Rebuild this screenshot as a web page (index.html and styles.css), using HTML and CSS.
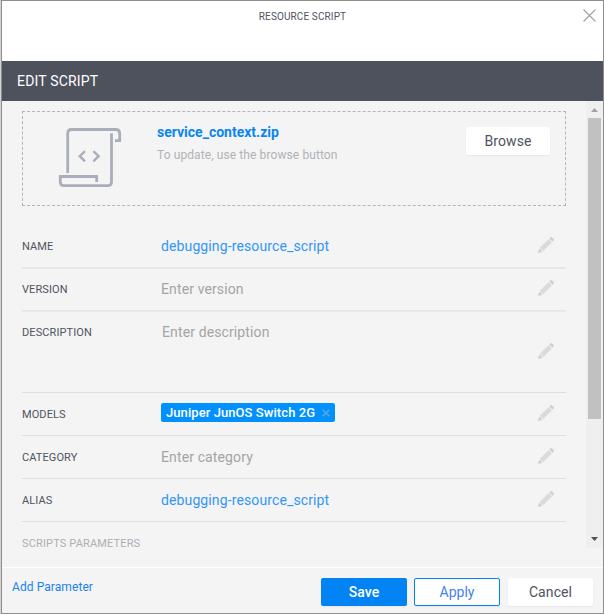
FILE: index.html
```html
<!DOCTYPE html>
<html lang="en">
<head>
<meta charset="utf-8">
<title>Resource Script</title>
<link rel="stylesheet" href="styles.css">
</head>
<body>
<svg class="defs" width="0" height="0" aria-hidden="true">
  <symbol id="pencil" viewBox="0 0 16 16">
    <path d="M0 16l1.2-4.6 3.4 3.4z" fill="#cfcfcf"/>
    <path d="M1.7 10.7L10.6 2l3.4 3.4-8.9 8.900z" fill="#dcdcdc"/>
    <path d="M11.3 1.4L12.5.3q.7-.6 1.4 0l1.8 1.8q.6.7 0 1.4l-1.1 1.2z" fill="#d0d0d0"/>
    <path d="M3.4 12.6l8.900-8.900" stroke="#d6d6d6" stroke-width=".8"/>
  </symbol>
</svg>
<div class="dialog">
  <header class="top">
    <h1 class="title">RESOURCE SCRIPT</h1>
    <svg class="close" width="13" height="13" viewBox="0 0 13 13"><path d="M.5.5l12 12M12.5.5l-12 12"/></svg>
  </header>
  <h2 class="bar"><span>EDIT SCRIPT</span></h2>
  <div class="body">
    <main class="form">
      <section class="drop">
        <svg class="script-icon" width="80" height="75" viewBox="0 0 80 75">
          <path d="M17.700 53V13.500q0-4 4-4H65.500q4.200 0 4.200 4v7.200H65"/>
          <path d="M61.500 13.200V62q0 3.700-3.700 3.700H14q-3.700 0-3.700-3.700V56.500H46.700V62"/>
          <path class="code" d="M35 31.200L29.800 36.200 35 41.400M43.400 31.200L48.600 36.200 43.400 41.400"/>
        </svg>
        <div class="file">
          <div class="file-name">service_context.zip</div>
          <div class="file-hint">To update, use the browse button</div>
        </div>
        <button class="btn browse">Browse</button>
      </section>
      <div class="row soft"><span class="label">NAME</span><span class="value link">debugging-resource_script</span><svg class="pen"><use href="#pencil"/></svg></div>
      <div class="row soft"><span class="label">VERSION</span><span class="value">Enter version</span><svg class="pen"><use href="#pencil"/></svg></div>
      <div class="row tall"><span class="label">DESCRIPTION</span><span class="value">Enter description</span><svg class="pen"><use href="#pencil"/></svg></div>
      <div class="row"><span class="label">MODELS</span><span class="value tags"><span class="tag">Juniper JunOS Switch 2G<svg class="tag-x" width="8" height="8" viewBox="0 0 8 8"><path d="M.7.7l6.600 6.600M7.300.7L.7 7.300"/></svg></span></span><svg class="pen"><use href="#pencil"/></svg></div>
      <div class="row"><span class="label">CATEGORY</span><span class="value">Enter category</span><svg class="pen"><use href="#pencil"/></svg></div>
      <div class="row"><span class="label">ALIAS</span><span class="value link">debugging-resource_script</span><svg class="pen"><use href="#pencil"/></svg></div>
      <div class="section-label">SCRIPTS PARAMETERS</div>
    </main>
    <div class="scroll">
      <svg class="arrow" width="7" height="4" viewBox="0 0 7 4"><path d="M0 4L3.500 0 7 4z" fill="#a3a3a3"/></svg>
      <div class="thumb"></div>
      <svg class="arrow" width="7" height="4" viewBox="0 0 7 4"><path d="M0 0L3.500 4 7 0z" fill="#505050"/></svg>
    </div>
  </div>
  <footer class="footer">
    <a class="add">Add Parameter</a>
    <button class="btn save">Save</button>
    <button class="btn apply">Apply</button>
    <button class="btn cancel">Cancel</button>
  </footer>
</div>
</body>
</html>
```
FILE: styles.css
```css
* { box-sizing: border-box; }
body {
  margin: 0;
  width: 604px;
  height: 614px;
  overflow: hidden;
  background: #d2d2d2;
  font-family: Roboto, "Liberation Sans", sans-serif;
  color: #4f535e;
}
.defs { display: block; }
.dialog {
  display: flex;
  flex-direction: column;
  width: 603px;
  height: 614px;
  margin-left: 1px;
  border: 1px solid #8e8e8e;
  background: #f4f4f4;
}
.top {
  position: relative;
  height: 60px;
  background: #fff;
}
.title {
  margin: 0;
  padding-top: 9px;
  font-size: 10px;
  line-height: 14px;
  font-weight: 400;
  text-align: center;
  letter-spacing: .12px;
}
.close {
  position: absolute;
  right: 7px;
  top: 8px;
  fill: none;
  stroke: #9da0aa;
  stroke-width: 1.1;
}
.bar {
  height: 40px;
  margin: 0;
  padding-left: 15px;
  background: #4e525d;
  color: #fff;
  font-size: 14px;
  line-height: 40px;
  font-weight: 400;
  letter-spacing: .18px;
}
.body {
  display: flex;
  height: 466px;
}
.form {
  flex: 1;
  padding: 10px 20px 0;
}
.drop {
  display: flex;
  align-items: flex-start;
  height: 95px;
  margin-bottom: 19px;
  border: 1px dashed #b2b4b8;
}
.script-icon {
  margin: 8px 0 0 27px;
  fill: none;
  stroke: #a9aeb8;
  stroke-width: 2.8;
}
.code { stroke-width: 2.4; }
.file { margin: 10px 0 0 27px; flex: 1; }
.file-name {
  color: #0a86f2;
  font-size: 14px;
  line-height: 20px;
  font-weight: 700;
}
.file-hint {
  margin-top: 5px;
  color: #b0b2b7;
  font-size: 12px;
  line-height: 16px;
  letter-spacing: .1px;
}
.btn {
  width: 86px;
  height: 28px;
  padding: 0;
  border: 0;
  border-radius: 2px;
  background: #fff;
  color: #4f535e;
  font: 400 14px/28px Roboto, sans-serif;
  box-shadow: 0 1px 2px rgba(0, 0, 0, .06);
}
.browse {
  width: 84px;
  margin: 15px 15px 0 0;
  letter-spacing: .1px;
}
.row {
  display: flex;
  align-items: center;
  height: 43px;
  padding-right: 12px;
  border-bottom: 1px solid #dfdfdf;
}
.soft {
  border-color: #e5e5e5;
  box-shadow: 0 1px #e9e9e9;
}
.tall { height: 82px; }
.tall .label { align-self: flex-start; margin-top: 12px; }
.tall .value { align-self: flex-start; margin-top: 11px; padding-left: 1px; }
.label {
  width: 139px;
  margin-top: 2px;
  font-size: 11px;
  line-height: 20px;
  letter-spacing: .1px;
}
.value {
  flex: 1;
  color: #a4a4a4;
  font-size: 14px;
  line-height: 20px;
  letter-spacing: .12px;
}
.link { color: #3296f8; }
.pen { width: 16px; height: 16px; margin-bottom: 2px; }
.tags { display: flex; margin-bottom: 3px; }
.tag {
  display: flex;
  align-items: center;
  height: 19px;
  padding: 0 5px;
  border-radius: 2px;
  background: #0191fe;
  color: #fff;
  font-size: 13px;
  font-weight: 500;
  letter-spacing: .07px;
}
.tag-x {
  margin-left: 7px;
  stroke: #55a9df;
  stroke-width: 1.6;
}
.section-label {
  padding-top: 12px;
  color: #adafb3;
  font-size: 11px;
  line-height: 20px;
  letter-spacing: .15px;
}
.scroll {
  display: flex;
  flex-direction: column;
  width: 17px;
  height: 447px;
  padding-top: 7px;
  background: #efefef;
}
.arrow { margin-left: 5px; }
.thumb {
  width: 13px;
  height: 301px;
  margin: 6px 0 118px 2px;
  flex: none;
  background: #c1c1c1;
}
.footer {
  display: flex;
  align-items: flex-start;
  flex: 1;
  padding: 10px 10px 0 10px;
  border-top: 1px solid #fff;
}
.add {
  flex: 1;
  color: #1a83f0;
  font-size: 12px;
  line-height: 18px;
  letter-spacing: .08px;
}
.save { margin-right: 7px; background: #0283f3; color: #fff; font-weight: 500; }
.apply { margin-right: 8px; border: 1px solid #0283f3; color: #3f83f0; line-height: 26px; }
.cancel { width: 85px; letter-spacing: .1px; }
```
